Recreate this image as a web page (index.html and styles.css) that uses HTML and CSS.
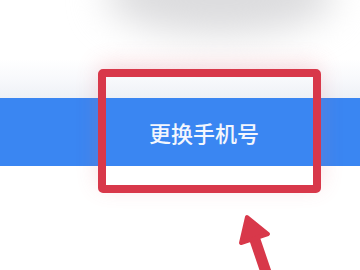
FILE: index.html
```html
<!DOCTYPE html>
<html>

<head>
    <title>更换手机号</title>
    <link rel="stylesheet" href="styles.css">
</head>

<body>
    <div class="screen">
        <div class="top">
            <div class="blob"></div>
        </div>
        <div class="bar">
            <span class="bar-text">更换手机号</span>
        </div>
        <div class="bottom"></div>

        <div class="highlight"></div>
        <svg class="arrow" width="360" height="270" viewBox="0 0 360 270">
            <line x1="253" y1="234" x2="270" y2="284" stroke="#d8384a" stroke-width="11" stroke-linecap="round"/>
            <polygon points="247,217 241,243 268,234" fill="#d8384a" stroke="#d8384a" stroke-width="4" stroke-linejoin="round"/>
        </svg>
    </div>
</body>

</html>
```

FILE: styles.css
```css
body {
    margin: 0;
    font-family: "Noto Sans CJK SC", "Noto Sans", sans-serif;
    background-color: #ffffff;
}

.screen {
    position: relative;
    width: 360px;
    height: 270px;
    overflow: hidden;
    background-color: #ffffff;
}

.top {
    position: relative;
    height: 98px;
    background: linear-gradient(to bottom, #ffffff 0%, #ffffff 60%, #f8f9fc 80%, #eef1f6 100%);
    overflow: hidden;
}

.blob {
    position: absolute;
    left: 105px;
    top: -45px;
    width: 230px;
    height: 80px;
    border-radius: 50%;
    background-color: #dcdcde;
    filter: blur(18px);
}

.bar {
    display: flex;
    align-items: center;
    justify-content: center;
    height: 68px;
    padding-left: 48px;
    background-color: #3a86f2;
}

.bar-text {
    color: #f3f6fd;
    font-size: 22px;
    font-weight: 500;
}

.bottom {
    height: 104px;
    background-color: #ffffff;
}

.highlight {
    position: absolute;
    left: 98px;
    top: 69px;
    width: 207px;
    height: 108px;
    border: 8px solid #d8384a;
    border-radius: 5px;
    box-shadow: 0 -6px 22px rgba(226, 90, 105, 0.2);
}

.arrow {
    position: absolute;
    left: 0;
    top: 0;
}
```
